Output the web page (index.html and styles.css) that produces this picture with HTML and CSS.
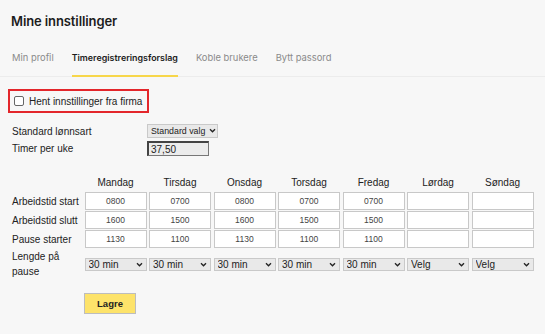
FILE: index.html
```html
<!DOCTYPE html>
<html lang="no">
<head>
<meta charset="utf-8">
<title>Mine innstillinger</title>
<link rel="stylesheet" href="styles.css">
</head>
<body>
<div class="page">
  <h1 class="title">Mine innstillinger</h1>
  <nav class="tabs">
    <a class="tab">Min profil</a>
    <a class="tab active">Timeregistreringsforslag</a>
    <a class="tab">Koble brukere</a>
    <a class="tab">Bytt passord</a>
  </nav>

  <label class="company">
    <input type="checkbox" class="check">
    <span>Hent innstillinger fra firma</span>
  </label>

  <div class="settings">
    <span class="lbl">Standard lønnsart</span>
    <span class="sel sel-std"><select><option>Standard valg</option></select><svg viewBox="0 0 8 6" class="chev"><path d="M1 1.5 L4 4.5 L7 1.5" /></svg></span>
    <span class="lbl">Timer per uke</span>
    <input class="hours" type="text" value="37,50">
  </div>

  <div class="week">
    <span></span>
    <span class="day">Mandag</span>
    <span class="day">Tirsdag</span>
    <span class="day">Onsdag</span>
    <span class="day">Torsdag</span>
    <span class="day">Fredag</span>
    <span class="day">Lørdag</span>
    <span class="day">Søndag</span>

    <span class="lbl">Arbeidstid start</span>
    <input class="cell" value="0800"><input class="cell" value="0700"><input class="cell" value="0800"><input class="cell" value="0700"><input class="cell" value="0700"><input class="cell" value=""><input class="cell" value="">

    <span class="lbl">Arbeidstid slutt</span>
    <input class="cell" value="1600"><input class="cell" value="1500"><input class="cell" value="1600"><input class="cell" value="1500"><input class="cell" value="1500"><input class="cell" value=""><input class="cell" value="">

    <span class="lbl">Pause starter</span>
    <input class="cell" value="1130"><input class="cell" value="1100"><input class="cell" value="1130"><input class="cell" value="1100"><input class="cell" value="1100"><input class="cell" value=""><input class="cell" value="">

    <span class="lbl lbl-wrap">Lengde på pause</span>
    <span class="sel"><select><option>30 min</option></select><svg viewBox="0 0 8 6" class="chev"><path d="M1 1.5 L4 4.5 L7 1.5" /></svg></span>
    <span class="sel"><select><option>30 min</option></select><svg viewBox="0 0 8 6" class="chev"><path d="M1 1.5 L4 4.5 L7 1.5" /></svg></span>
    <span class="sel"><select><option>30 min</option></select><svg viewBox="0 0 8 6" class="chev"><path d="M1 1.5 L4 4.5 L7 1.5" /></svg></span>
    <span class="sel"><select><option>30 min</option></select><svg viewBox="0 0 8 6" class="chev"><path d="M1 1.5 L4 4.5 L7 1.5" /></svg></span>
    <span class="sel"><select><option>30 min</option></select><svg viewBox="0 0 8 6" class="chev"><path d="M1 1.5 L4 4.5 L7 1.5" /></svg></span>
    <span class="sel"><select><option>Velg</option></select><svg viewBox="0 0 8 6" class="chev"><path d="M1 1.5 L4 4.5 L7 1.5" /></svg></span>
    <span class="sel"><select><option>Velg</option></select><svg viewBox="0 0 8 6" class="chev"><path d="M1 1.5 L4 4.5 L7 1.5" /></svg></span>
  </div>

  <div class="actions">
    <button class="save" type="button">Lagre</button>
  </div>
</div>
</body>
</html>
```
FILE: styles.css
```css
html, body {
  margin: 0;
  padding: 0;
  background: #f7f7f7;
}
body {
  font-family: "Liberation Sans", Arial, sans-serif;
  color: #222;
}
.page {
  width: 545px;
  height: 334px;
  overflow: hidden;
}
.title {
  margin: 0;
  padding: 12px 0 0 11px;
  font-family: Inter, "Open Sans", sans-serif;
  font-weight: 600;
  font-size: 13px;
  letter-spacing: -0.1px;
  line-height: 18px;
  color: #1c1c1c;
}
.tabs {
  display: flex;
  gap: 18px;
  margin-top: 18px;
  padding-left: 12px;
  border-bottom: 1px solid #ececec;
}
.tab {
  font-family: Inter, "Open Sans", sans-serif;
  font-size: 9.4px;
  line-height: 13px;
  color: #8a8a8a;
  padding: 3px 0 11px;
  border-bottom: 2px solid transparent;
  margin-bottom: -1px;
}
.tab.active {
  color: #1c1c1c;
  font-weight: 600;
  font-size: 8.9px;
  border-bottom-color: #f7d64a;
}
.company {
  display: inline-flex;
  align-items: center;
  gap: 5px;
  margin: 12px 0 0 8px;
  padding: 0 5px 0 4px;
  height: 20px;
  border: 2px solid #e3262b;
  font-size: 10px;
  color: #222;
}
.check {
  appearance: none;
  margin: 0;
  width: 10px;
  height: 10px;
  border: 1px solid #666;
  border-radius: 2px;
  background: #fff;
}
.settings {
  display: grid;
  grid-template-columns: 135px auto;
  justify-content: start;
  align-items: center;
  row-gap: 3px;
  margin: 11px 0 0 12px;
}
.lbl {
  font-size: 10px;
  line-height: 13px;
  color: #222;
}
.sel {
  position: relative;
  display: block;
}
.sel select {
  appearance: none;
  display: block;
  width: 100%;
  height: 13px;
  margin: 0;
  padding: 0 0 0 3px;
  border: 1px solid #c9c9c9;
  background: #e9e9e9;
  font-family: "Liberation Sans", Arial, sans-serif;
  font-size: 10px;
  line-height: 11px;
  color: #222;
  border-radius: 0;
}
.chev {
  position: absolute;
  right: 4px;
  top: 4px;
  width: 7px;
  height: 5px;
  fill: none;
  stroke: #222;
  stroke-width: 1.6;
}
.sel-std {
  width: 71px;
}
.sel-std select {
  height: 14px;
  padding-left: 3px;
  font-size: 8.8px;
}
.sel-std .chev {
  right: 2px;
}
.hours {
  box-sizing: border-box;
  width: 62px;
  height: 15px;
  margin: 0;
  padding: 0 0 0 2px;
  border-style: solid;
  border-width: 2px 1px 1px 2px;
  border-color: #444 #777 #777 #444;
  background: #ececec;
  font-family: "Liberation Sans", Arial, sans-serif;
  font-size: 10px;
  color: #222;
}
.week {
  display: grid;
  grid-template-columns: 70px repeat(7, 62px);
  column-gap: 2.5px;
  row-gap: 1px;
  align-items: center;
  margin: 19px 0 0 12px;
}
.day {
  text-align: center;
  font-size: 10px;
  line-height: 13px;
  padding: 1px 0 2px;
  color: #222;
}
.cell {
  box-sizing: border-box;
  width: 62px;
  height: 18px;
  margin: 0;
  padding: 0;
  border: 1px solid #c8c8c8;
  background: #fff;
  text-align: center;
  font-family: "Liberation Sans", Arial, sans-serif;
  font-size: 8.5px;
  color: #444;
}
.lbl-wrap {
  line-height: 15px;
}
.actions {
  margin: 14px 0 0 84px;
}
.save {
  width: 52px;
  height: 21px;
  margin: 0;
  padding: 0;
  border: 1px solid #bdbdbd;
  background: #fde36a;
  font-family: "Liberation Sans", Arial, sans-serif;
  font-size: 9.5px;
  font-weight: 600;
  color: #222;
  border-radius: 0;
}
```
